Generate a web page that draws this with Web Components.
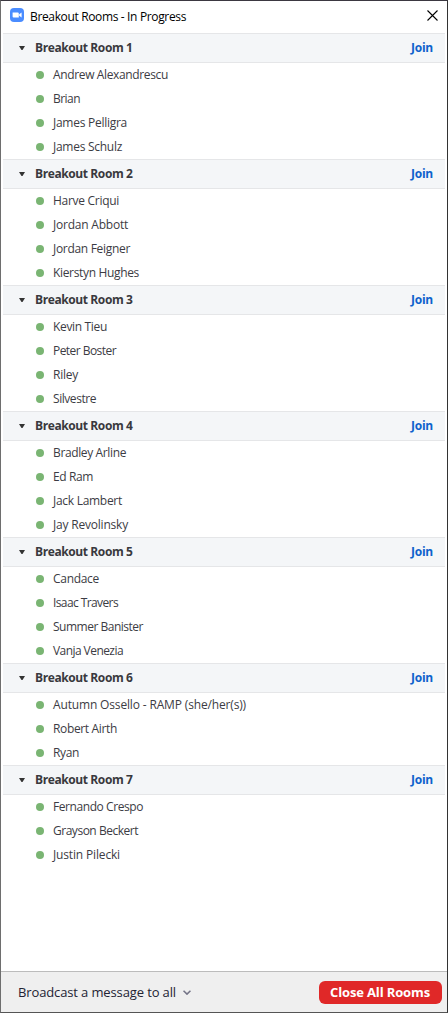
<!DOCTYPE html>
<html lang="en">
<head>
<meta charset="utf-8">
<title>Breakout Rooms - In Progress</title>
<style>
html,body{margin:0;height:100%;overflow:hidden;background:#fff}
body{font-family:"Open Sans","Noto Sans",sans-serif;font-size:12px}
</style>
</head>
<body>
<breakout-window></breakout-window>
<script>
// A single line of text whose tracking is adjusted to a given advance width.
class FitText extends HTMLElement {
  connectedCallback() {
    const root = this.attachShadow({mode: 'open'});
    root.innerHTML = `<style>:host{display:block;white-space:nowrap;width:max-content}span{display:inline-block}</style><span><slot></slot></span>`;
    const span = root.querySelector('span');
    const n = this.textContent.length;
    const w = Number(this.getAttribute('w'));
    if (w && n) span.style.letterSpacing = (w - span.getBoundingClientRect().width) / n + 'px';
  }
}

class RoomMember extends HTMLElement {
  connectedCallback() {
    this.attachShadow({mode: 'open'}).innerHTML = `
      <style>
        :host{display:flex;align-items:center;height:24px;padding-left:33px;color:#3c3c44;line-height:24px}
        i{width:8px;height:8px;border-radius:50%;background:#7ab573;margin-right:9px}
      </style><i></i><slot></slot>`;
  }
}

class BreakoutRoom extends HTMLElement {
  connectedCallback() {
    this.attachShadow({mode: 'open'}).innerHTML = `
      <style>
        :host{display:block}
        header{box-sizing:border-box;display:flex;align-items:center;height:30px;padding:0 12px 0 16px;background:#f4f6f8;border-top:1px solid #e5e6e8;border-bottom:1px solid #e5e6e8;font-weight:700;color:#39393d;line-height:28px}
        svg{width:6px;height:4px;margin:0 10px 0 0}
        .join{margin-left:auto;color:#0e62cc}
      </style>
      <header><svg viewBox="0 0 6 4"><path d="M0 0h6L3.5 4h-1z" fill="#333"/></svg>
      <fit-text w="97.500">${this.getAttribute('name')}</fit-text>
      <fit-text class="join" w="22">Join</fit-text></header><slot></slot>`;
  }
}

class TitleBar extends HTMLElement {
  connectedCallback() {
    this.attachShadow({mode: 'open'}).innerHTML = `
      <style>
        :host{display:flex;align-items:center;height:32px;box-sizing:border-box;padding:0 9px 2px 9px;color:#000}
        .logo{width:14px;height:14px;margin:0 6px 2px 0}
        .x{width:11px;height:11px;margin:0 0 2px auto}
      </style>
      <svg class="logo" viewBox="0 0 14 14"><rect width="14" height="14" rx="4" fill="#4a8cff"/><path d="M2.6 4.500h5.2q1 0 1 1v4H3.6q-1 0-1-1zM9.2 6.2l2.4-1.6v4.8L9.2 7.8z" fill="#fff"/></svg>
      <slot></slot>
      <svg class="x" viewBox="0 0 11 11"><path d="M.5.5l10 10M10.5.5l-10 10" stroke="#000" stroke-width="1.1"/></svg>`;
  }
}

class ActionFooter extends HTMLElement {
  connectedCallback() {
    this.attachShadow({mode: 'open'}).innerHTML = `
      <style>
        :host{box-sizing:border-box;display:flex;align-items:center;height:41px;border-top:1px solid #bcbcbc;background:#efefef;padding:0 5px 0 17px;font-size:13px;color:#232333}
        svg{width:8px;height:5px;margin:0 0 0 7px}
        button{box-sizing:border-box;margin:1px 0 0 auto;width:123px;height:23px;border:0;border-radius:6px;background:#e02828;color:#fff;font:700 13px/22px "Open Sans","Noto Sans",sans-serif;padding:0 0 1px 11px}
      </style>
      <fit-text w="158">Broadcast a message to all</fit-text>
      <svg viewBox="0 0 8 5"><path d="M.5.7L4 4.1 7.500.7" fill="none" stroke="#747487" stroke-width="1.6"/></svg>
      <button><fit-text w="100">Close All Rooms</fit-text></button>`;
  }
}

const rooms = [
  [['Andrew Alexandrescu',115],['Brian',27],['James Pelligra',74],['James Schulz',69]],
  [['Harve Criqui',66],['Jordan Abbott',75],['Jordan Feigner',77],['Kierstyn Hughes',86]],
  [['Kevin Tieu',54],['Peter Boster',63],['Riley',25],['Silvestre',43]],
  [['Bradley Arline',73],['Ed Ram',40],['Jack Lambert',69],['Jay Revolinsky',75]],
  [['Candace',46],['Isaac Travers',65],['Summer Banister',90],['Vanja Venezia',70]],
  [['Autumn Ossello - RAMP (she/her(s))',193],['Robert Airth',64],['Ryan',26]],
  [['Fernando Crespo',90],['Grayson Beckert',85],['Justin Pilecki',67]]
];

class BreakoutWindow extends HTMLElement {
  connectedCallback() {
    this.attachShadow({mode: 'open'}).innerHTML = `
      <style>
        :host{box-sizing:border-box;display:flex;flex-direction:column;width:448px;height:1013px;background:#fff;border:1px solid #6e6e6e;border-top-color:#3b3841;border-right-color:#333;border-bottom-color:#555}
        main{flex:1;padding:0 2px}
      </style>
      <title-bar><fit-text w="156">Breakout Rooms - In Progress</fit-text></title-bar>
      <main>${rooms.map((m, i) => `<breakout-room name="Breakout Room ${i + 1}">${m.map(([n, w]) => `<room-member><fit-text w="${w}">${n}</fit-text></room-member>`).join('')}</breakout-room>`).join('')}</main>
      <action-footer></action-footer>`;
  }
}
customElements.define('fit-text', FitText);
customElements.define('room-member', RoomMember);
customElements.define('breakout-room', BreakoutRoom);
customElements.define('title-bar', TitleBar);
customElements.define('action-footer', ActionFooter);
customElements.define('breakout-window', BreakoutWindow);
</script>
</body>
</html>
